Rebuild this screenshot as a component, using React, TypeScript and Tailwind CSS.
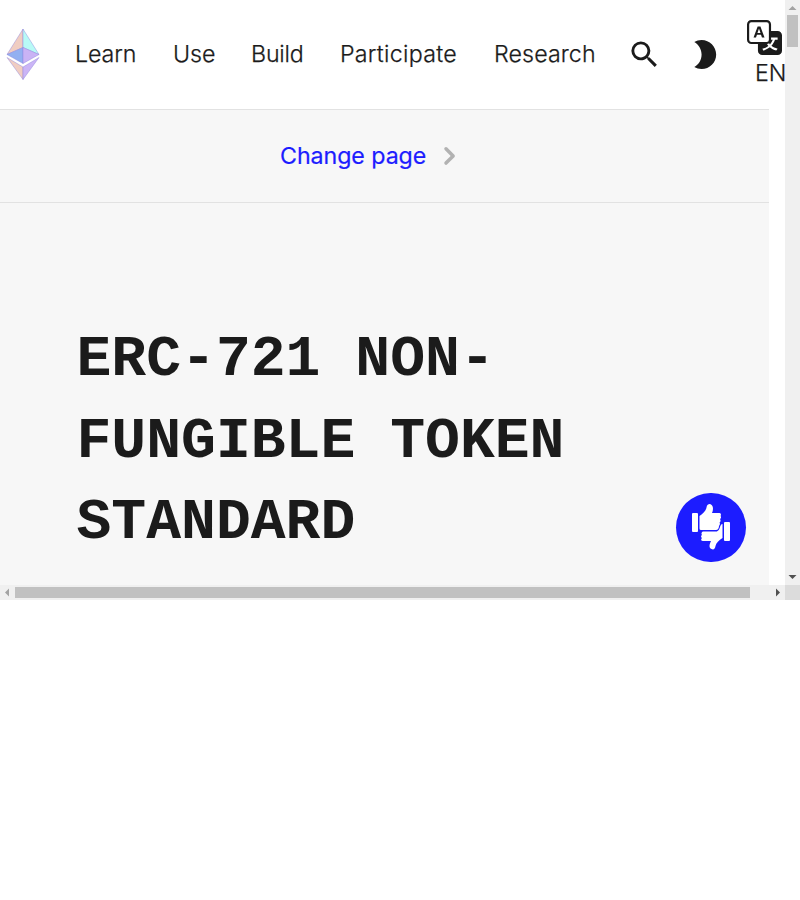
import { MdSearch, MdBrightness2 } from "react-icons/md";
import { BsTranslate } from "react-icons/bs";

function EthLogo() {
  return (
    <svg className="mb-[2px] ml-[6px] h-[52px] w-[34px] shrink-0" viewBox="0 0 34 52" stroke="#8d83dc" strokeOpacity=".55" strokeWidth=".8" strokeLinejoin="round">
      <path d="M17 1 1 26.5 17 19.5Z" fill="#f0cdc2" />
      <path d="M17 1 33 26.5 17 19.5Z" fill="#b8faf6" />
      <path d="M1 26.5 17 19.5V35.5Z" fill="#92b0f1" />
      <path d="M33 26.5 17 19.5V35.5Z" fill="#c9b3f5" />
      <path d="M1 29.5 17 39V51.5Z" fill="#f0cdc2" />
      <path d="M33 29.5 17 39V51.5Z" fill="#cbb5f6" />
    </svg>
  );
}

function Thumbs() {
  return (
    <svg className="mb-[1px] h-[48px] w-[40px]" viewBox="0 0 40 48" fill="white">
      <rect x="1" y="10" width="6" height="19" rx="1" />
      <path d="M8.500 13C12 11 15 7.500 15.500 4.500C16 1.500 18 .7 19.500 1.200C22.500 2.200 22.500 7 21 10H28.500C30 10 30.300 12 29.500 13C30.500 14 30 15.500 29 16C30 17.500 29.500 19 28.500 19.500C29.500 21 28.500 22.500 28 23C28 25 27 27 25 27H10Q8.500 27 8.500 25.500V13Z" />
      <rect x="33" y="19" width="6" height="19" rx="1" />
      <path d="M31.500 21V35C28 37 25 40 24.500 43C24 46 22.500 47 20.500 46C17.500 45 18.500 41 20 38H12C10 38 9.500 36 11 35C9.500 34 10 32.500 11 32C10 30.500 10.500 29 12 28.500H25C27.500 28.500 28.500 26 29 24C29.500 22.500 30 21 31.500 21Z" />
    </svg>
  );
}

function Nav() {
  return (
    <header className="flex h-[109px] w-[785px] items-center overflow-hidden bg-white text-[23.23px] leading-[37px] font-light">
      <EthLogo />
      <nav className="mb-[2px] ml-[35px] flex shrink-0 [-webkit-text-stroke:0.25px]">
        <a className="w-[98px] tracking-[-0.1px]">Learn</a>
        <a className="w-[78px]">Use</a>
        <a className="w-[89px] tracking-[-0.2px]">Build</a>
        <a className="w-[154px] tracking-[0.27px]">Participate</a>
        <a className="w-[133px] tracking-[0.1px]">Research</a>
      </nav>
      <MdSearch className="h-[35px] w-[35px] shrink-0" />
      <MdBrightness2 className="ml-[25px] h-[35px] w-[35px] shrink-0" />
      <div className="ml-[25px] h-[69px] w-[38px] shrink-0">
        <BsTranslate className="h-[35px] w-[35px]" />
        <div className="pl-[8px] leading-[35px] [-webkit-text-stroke:0.25px]">EN</div>
      </div>
    </header>
  );
}

export default function App() {
  return (
    <div className="h-[900px] w-[800px] overflow-hidden bg-white font-['Inter',sans-serif] text-[#1b1b1b]">
      <div className="relative flex h-[585px]">
        <div className="w-[785px] overflow-hidden">
          <Nav />
          <main className="h-[476px] w-[769px] border-t border-[#e2e2e2] bg-[#f7f7f7]">
            <div className="flex h-[93px] items-center border-b border-[#e2e2e2] pl-[280px] text-[23.23px] font-normal text-[#1c1cff]">
              <span className="w-[152px] tracking-[-0.07px] [-webkit-text-stroke:0.2px]">Change page</span>
              <svg className="mb-px h-[35px] w-[35px]" viewBox="0 0 24 24" fill="none" stroke="#b2b2b2" strokeWidth="2.4" strokeLinecap="round" strokeLinejoin="round">
                <path d="M9.600 7.400 14.500 12.300 9.600 17.200" />
              </svg>
            </div>
            <h1 className="pt-[116px] pl-[76.500px] font-['Liberation_Mono',monospace] text-[58.08px] leading-[81.500px] font-bold">
              ERC-721 NON-
              <br />
              FUNGIBLE TOKEN
              <br />
              STANDARD
            </h1>
          </main>
        </div>
        <button className="absolute top-[492.500px] left-[676px] flex h-[69.500px] w-[70px] items-center justify-center rounded-full bg-[#1c1cff]">
          <Thumbs />
        </button>
        <div className="flex w-[15px] flex-col items-center justify-between bg-[#f0f0f0]">
          <svg className="h-[15px] w-[15px]" viewBox="0 0 15 15" fill="#a3a3a3"><path d="M3.500 10H11.500L7.500 6Z" /></svg>
          <div className="mb-auto h-[32px] w-[11px] bg-[#c1c1c1]" />
          <svg className="h-[15px] w-[15px]" viewBox="0 0 15 15" fill="#505050"><path d="M3.500 5H11.500L7.500 9Z" /></svg>
        </div>
      </div>
      <div className="flex h-[15px] items-center bg-[#f0f0f0]">
        <svg className="h-[15px] w-[15px]" viewBox="0 0 15 15" fill="#a3a3a3"><path d="M9 3.500V11.500L5 7.500Z" /></svg>
        <div className="h-[11px] w-[735px] bg-[#c1c1c1]" />
        <svg className="ml-[20px] h-[15px] w-[15px]" viewBox="0 0 15 15" fill="#505050"><path d="M6 3.500V11.500L10 7.500Z" /></svg>
        <div className="h-[15px] w-[15px] bg-[#dcdcdc]" />
      </div>
    </div>
  );
}
